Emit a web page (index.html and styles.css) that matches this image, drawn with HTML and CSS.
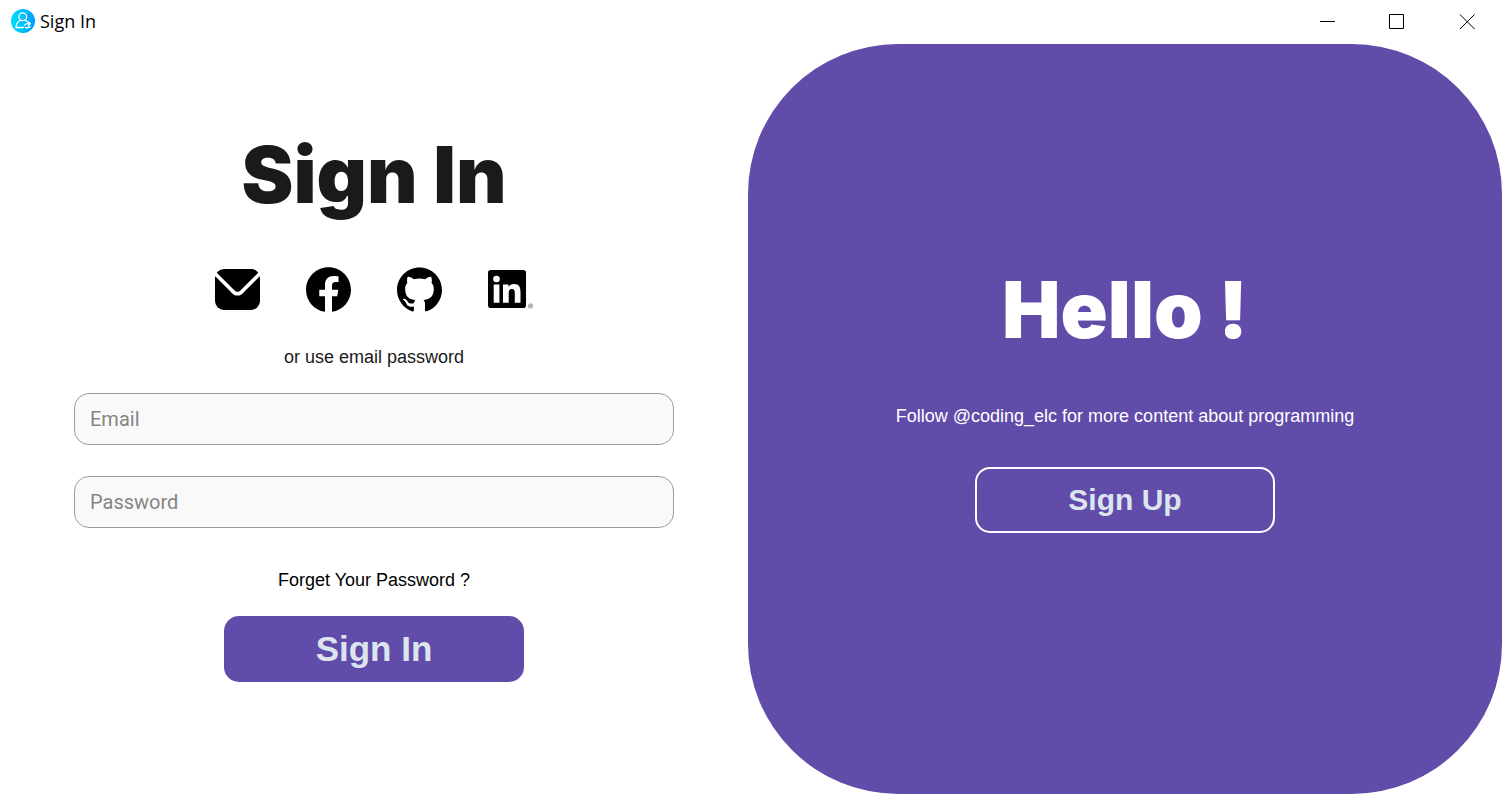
FILE: index.html
```html
<!DOCTYPE html>
<html lang="en">
<head>
<meta charset="utf-8">
<title>Sign In</title>
<link rel="stylesheet" href="styles.css">
</head>
<body>
<header class="titlebar">
  <svg class="app-icon" viewBox="0 0 24 24" aria-hidden="true">
    <defs><linearGradient id="sky" x1="0" y1="0" x2="1" y2="0"><stop offset="0" stop-color="#00e0fb"/><stop offset="1" stop-color="#009dfd"/></linearGradient></defs>
    <circle cx="12" cy="12" r="12" fill="url(#sky)"/>
    <g fill="none" stroke="#fff" stroke-width="1.3" stroke-linecap="round" stroke-linejoin="round">
      <circle cx="11.700" cy="7.800" r="3.900"/>
      <path d="M9 11.500c-2.500 1.500-4 3.500-4 7h7.500M14.200 11.300c.8.500 1.500 1 2 1.500M13.500 16.300c.8-1.500 3-1.800 5.300-1.500M17.300 13l2 1.800-2 1.700M19 17.500c-1 1.200-2.500 1.500-4.500 1"/>
    </g>
  </svg>
  <span class="window-title">Sign In</span>
  <div class="window-controls">
    <button class="window-button" type="button" aria-label="Minimize"><svg viewBox="0 0 16 16"><path d="M1 7.500h15"/></svg></button>
    <button class="window-button" type="button" aria-label="Maximize"><svg viewBox="0 0 16 16"><path d="M.5.5h14v14H.5z"/></svg></button>
    <button class="window-button" type="button" aria-label="Close"><svg viewBox="0 0 16 16"><path d="M1 .5l14.500 14.500M15.500 .5L1 15"/></svg></button>
  </div>
</header>
<main class="content">
  <form class="signin">
    <h1 class="heading">Sign In</h1>
    <nav class="socials" aria-label="Sign in with">
      <a class="social" href="#" aria-label="Email"><svg viewBox="0 0 45 45"><rect y="2" width="45" height="41" rx="9"/><path d="M-3 3.500 17 23.500Q22.500 30 28 23.500L48 3.500" fill="none" stroke="#fff" stroke-width="3.600"/></svg></a>
      <a class="social" href="#" aria-label="Facebook"><svg viewBox="0 0 24 24"><path d="M24 12.073c0-6.627-5.373-12-12-12s-12 5.373-12 12c0 5.990 4.388 10.954 10.125 11.854v-8.385H7.078v-3.470h3.047V9.430c0-3.007 1.792-4.669 4.533-4.669 1.312 0 2.686.235 2.686.235v2.953H15.830c-1.491 0-1.956.925-1.956 1.874v2.250h3.328l-.532 3.470h-2.796v8.385C19.612 23.027 24 18.062 24 12.073z"/></svg></a>
      <a class="social" href="#" aria-label="GitHub"><svg viewBox="0 0 24 24"><path d="M12 .297c-6.630 0-12 5.373-12 12 0 5.303 3.438 9.800 8.205 11.385.6.113.82-.258.82-.577 0-.285-.01-1.040-.015-2.040-3.338.724-4.042-1.610-4.042-1.610C4.422 18.070 3.633 17.700 3.633 17.700c-1.087-.744.084-.729.084-.729 1.205.084 1.838 1.236 1.838 1.236 1.070 1.835 2.809 1.305 3.495.998.108-.776.417-1.305.76-1.605-2.665-.3-5.466-1.332-5.466-5.930 0-1.310.465-2.380 1.235-3.220-.135-.303-.54-1.523.105-3.176 0 0 1.005-.322 3.300 1.230.96-.267 1.980-.399 3-.405 1.020.006 2.040.138 3 .405 2.280-1.552 3.285-1.230 3.285-1.230.645 1.653.24 2.873.12 3.176.765.840 1.230 1.910 1.230 3.220 0 4.610-2.805 5.625-5.475 5.920.42.360.81 1.096.81 2.220 0 1.606-.015 2.896-.015 3.286 0 .315.21.690.825.570C20.565 22.092 24 17.592 24 12.297c0-6.627-5.373-12-12-12"/></svg></a>
      <a class="social" href="#" aria-label="LinkedIn"><svg viewBox="0 0 45 45"><rect y="3" width="38" height="38" rx="2.800"/><g fill="#fff"><circle cx="8.500" cy="12" r="3.300"/><path d="M5.700 17.500h5.700v18.200H5.700zM15 17.500h5.500V20c1-1.800 3-3 5.500-3 5.300 0 6.500 3.500 6.500 8.300v10.400h-5.700v-9.300c0-2.300-.3-4.500-2.900-4.500-2.700 0-3.200 2-3.200 4.500v9.300H15z"/></g><g fill="none" stroke="#555" stroke-width=".5"><circle cx="42.600" cy="39" r="2.200"/><path d="M41.800 40.300v-2.500h1q.8 0 .8.700t-.8.700h-1m1 0 .8 1.100"/></g></svg></a>
    </nav>
    <p class="hint">or use email password</p>
    <div class="fields">
      <input class="field" type="email" placeholder="Email" aria-label="Email">
      <input class="field" type="password" placeholder="Password" aria-label="Password">
    </div>
    <a class="forgot" href="#">Forget Your Password ?</a>
    <button class="button button-primary" type="submit">Sign In</button>
  </form>
  <section class="welcome">
    <h2 class="heading">Hello !</h2>
    <p class="follow">Follow @coding_elc for more content about programming</p>
    <button class="button button-outline" type="button">Sign Up</button>
  </section>
</main>
</body>
</html>
```

FILE: styles.css
```css
* {
  box-sizing: border-box;
}

body {
  margin: 0;
  min-height: 100vh;
  display: flex;
  flex-direction: column;
  background: #fff;
  color: #000;
  font: 18px/24px "Liberation Sans", Arial, sans-serif;
}

.titlebar {
  display: flex;
  align-items: center;
  height: 44px;
  padding: 0 0 2px 11px;
}

.app-icon {
  width: 24px;
  height: 24px;
  margin-right: 5px;
}

.window-title {
  font-family: "Open Sans", "Noto Sans", sans-serif;
  font-size: 18px;
}

.window-controls {
  display: flex;
  height: 100%;
  margin-left: auto;
}

.window-button {
  display: grid;
  place-items: center;
  width: 70px;
  padding: 2px 0 0;
  border: 0;
  background: none;
}

.window-button svg {
  width: 16px;
  height: 16px;
  fill: none;
  stroke: #000;
}

.content {
  flex: 1;
  display: grid;
  grid-template-columns: 748fr 754fr;
}

.signin,
.welcome {
  display: flex;
  flex-direction: column;
  align-items: center;
}

.signin {
  padding: 87px 24px 32px;
}

.heading {
  margin: 0;
  font: 900 78px/88px Inter, "Open Sans", sans-serif;
}

.signin .heading {
  color: #1a1a1a;
}

.socials {
  display: flex;
  gap: 46px;
  margin-top: 48px;
}

.social,
.social svg {
  display: block;
  width: 45px;
  height: 45px;
}

.hint {
  margin: 33px 0 24px;
  color: #1a1a1a;
}

.fields {
  display: grid;
  gap: 31px;
  width: 100%;
  max-width: 600px;
}

.field {
  width: 100%;
  height: 52px;
  padding: 0 15px;
  border: 1px solid #979da2;
  border-radius: 15px;
  background: #f9f9fa;
  color: #1a1a1a;
  font: 20px/24px Roboto, sans-serif;
}

.field::placeholder {
  color: #858585;
  opacity: 1;
}

.forgot {
  margin: 40px 0 24px;
  color: #000;
  text-decoration: none;
}

.button {
  width: 100%;
  max-width: 300px;
  height: 66px;
  border: 0;
  border-radius: 15px;
  color: #dce4ee;
  font: bold 35px/40px "Liberation Sans", Arial, sans-serif;
}

.button-primary {
  background: #614caa;
}

.button-outline {
  border: 2px solid #fff;
  background: none;
  font-size: 30px;
}

.welcome {
  justify-content: center;
  padding: 24px 24px 63px;
  border-radius: 150px;
  background: #614caa;
  color: #fff;
}

.follow {
  margin: 50px 0 39px;
}
```
